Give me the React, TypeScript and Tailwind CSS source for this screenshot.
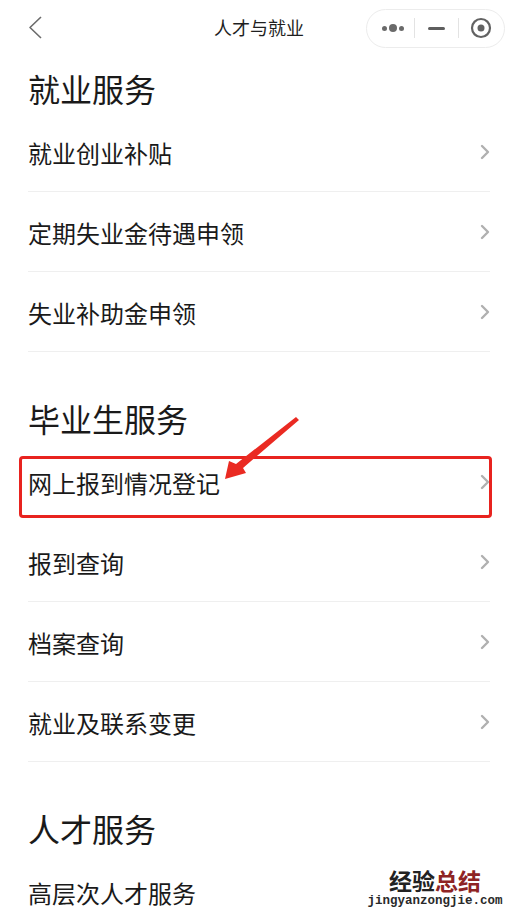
import { ReactNode } from 'react';

// 列表数据
const SECTIONS: { title: string; items: string[] }[] = [
  { title: '就业服务', items: ['就业创业补贴', '定期失业金待遇申领', '失业补助金申领'] },
  { title: '毕业生服务', items: ['网上报到情况登记', '报到查询', '档案查询', '就业及联系变更'] },
  { title: '人才服务', items: ['高层次人才服务'] },
];

const FONT = { fontFamily: '"Noto Sans CJK SC", "Noto Sans", sans-serif' };

function Chevron() {
  return (
    <svg width="10" height="16" viewBox="0 0 10 16" fill="none">
      <polyline points="2,2 8,8 2,14" stroke="#b0b0b0" strokeWidth="2.4" strokeLinecap="round" strokeLinejoin="round" />
    </svg>
  );
}

function NavBar() {
  return (
    <div className="relative h-[55px] flex items-center">
      <svg className="ml-[28px]" width="15" height="23" viewBox="0 0 15 23" fill="none">
        <polyline points="13,1 2,11.5 13,22" stroke="#6b6b6b" strokeWidth="1.6" strokeLinejoin="round" />
      </svg>
      <div className="absolute left-0 right-0 text-center text-[18px] text-[#1f1f1f] pointer-events-none">人才与就业</div>
      {/* 胶囊按钮 */}
      <div className="ml-auto mr-[13px] mt-[1px] h-[39px] w-[139px] rounded-full border border-[#ececec] flex items-center">
        <div className="flex-1 flex items-center justify-center gap-[2px] pl-[4px]">
          <span className="w-[5px] h-[5px] rounded-full bg-[#6a6a6a]" />
          <span className="w-[8px] h-[8px] rounded-full bg-[#6a6a6a]" />
          <span className="w-[5px] h-[5px] rounded-full bg-[#6a6a6a]" />
        </div>
        <div className="w-px h-[20px] bg-[#e3e3e3]" />
        <div className="flex-1 flex items-center justify-center">
          <span className="w-[17px] h-[3px] rounded-full bg-[#5e5e5e]" />
        </div>
        <div className="w-px h-[20px] bg-[#e3e3e3]" />
        <div className="flex-1 flex items-center justify-center pr-[2px]">
          <svg width="22" height="22" viewBox="0 0 22 22">
            <circle cx="11" cy="11" r="9" fill="none" stroke="#626262" strokeWidth="2.2" />
            <circle cx="11" cy="11" r="3.5" fill="#626262" />
          </svg>
        </div>
      </div>
    </div>
  );
}

function Row({ label, marked, last }: { label: string; marked?: boolean; last?: boolean }) {
  return (
    <div
      className={`relative h-[80px] flex items-center justify-between ${
        marked || last ? '' : 'border-b border-[#efefef]'
      }`}
    >
      <span className="text-[24px] leading-none text-[#1a1a1a] pt-[2px]">{label}</span>
      <Chevron />
      {marked && (
        <div className="absolute left-[-9px] right-[-2px] top-[14px] bottom-[4px] border-[3px] border-[#e8231f] rounded-[4px]" />
      )}
    </div>
  );
}

function Section({ title, items, first }: { title: string; items: string[]; first?: boolean }): ReactNode {
  return (
    <div className={first ? 'mt-[13px]' : 'mt-[46px]'}>
      <div className="h-[44px] flex items-center text-[32px] leading-none text-[#1a1a1a] pb-[4px]">{title}</div>
      {items.map((it, i) => (
        <Row key={it} label={it} marked={it === '网上报到情况登记'} last={!first && i === items.length - 1 && title === '人才服务'} />
      ))}
    </div>
  );
}

function App() {
  return (
    <div className="relative w-full h-[920px] overflow-hidden bg-white" style={FONT}>
      <NavBar />

      <div className="px-[28px]">
        {SECTIONS.map((s, i) => (
          <Section key={s.title} title={s.title} items={s.items} first={i === 0} />
        ))}
      </div>

      {/* 标注箭头 */}
      <svg className="absolute left-0 top-0 pointer-events-none" width="518" height="920">
        <polygon points="296,417 299,420 243,468 246,473 225,479 229,461 236,464" fill="#ea2a22" />
      </svg>

      {/* 水印 */}
      <div className="absolute left-[364px] top-[869px] w-[142px] bg-white text-center pb-[3px]">
        <div className="h-[22px] leading-[22px] text-[23px] font-bold">
          <span className="text-[#222]">经验</span>
          <span className="text-[#8e2424]">总结</span>
        </div>
        <div
          className="mt-[4px] h-[13px] leading-[13px] text-[12.5px] font-bold text-[#2a2a2a]"
          style={{ fontFamily: '"Liberation Mono", monospace' }}
        >
          jingyanzongjie.com
        </div>
      </div>
    </div>
  );
}

export default App;
